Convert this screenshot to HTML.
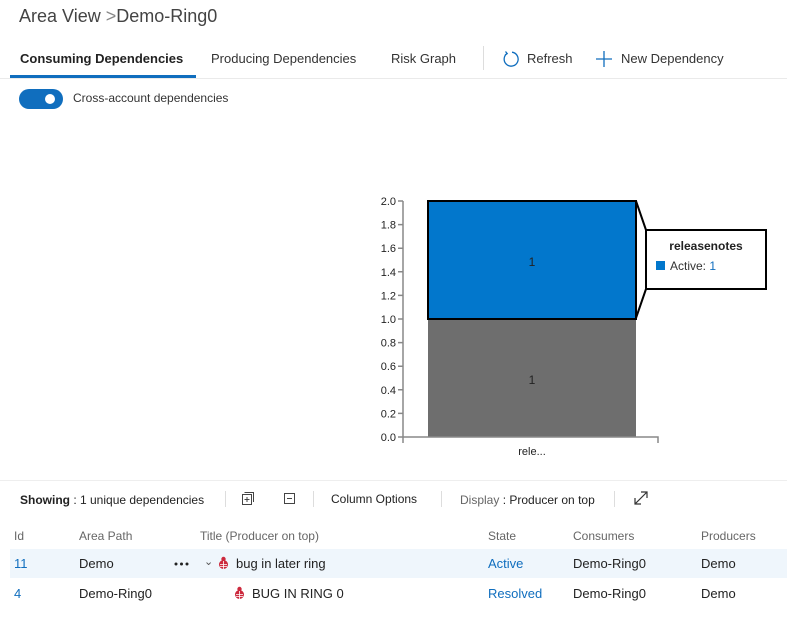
<!DOCTYPE html>
<html><head><meta charset="utf-8"><style>
body{margin:0;width:787px;height:620px;background:#fff;font-family:"Segoe UI","Liberation Sans",sans-serif;color:#333;position:relative;overflow:hidden}
.a{position:absolute;white-space:nowrap}
.s13{font-size:13px}
.g{color:#666}
.blue{color:#106ebe}
</style></head><body>
<div class="a" style="left:19px;top:6px;font-size:18px;color:#444;font-weight:300">Area View <span style="color:#888">&gt;</span>Demo-Ring0</div>

<div class="a s13" style="left:20px;top:51px;font-weight:600;color:#222">Consuming Dependencies</div>
<div class="a" style="left:10px;top:75px;width:186px;height:3px;background:#106ebe"></div>
<div class="a" style="left:0;top:78px;width:787px;height:1px;background:#eaeaea"></div>
<div class="a s13" style="left:211px;top:51px">Producing Dependencies</div>
<div class="a s13" style="left:391px;top:51px">Risk Graph</div>
<div class="a" style="left:483px;top:46px;width:1px;height:24px;background:#ddd"></div>
<svg class="a" style="left:502px;top:50px" width="18" height="18" viewBox="0 0 18 18"><path d="M5 3.5 A7 7 0 1 0 10 2.2" fill="none" stroke="#106ebe" stroke-width="1.3"/><path d="M3.5 1.5 L5.2 3.6 L3 5" fill="none" stroke="#106ebe" stroke-width="1.3"/></svg>
<div class="a s13" style="left:527px;top:51px">Refresh</div>
<svg class="a" style="left:596px;top:51px" width="16" height="16"><path d="M8 0V16M0 8H16" stroke="#106ebe" stroke-width="1.3"/></svg>
<div class="a s13" style="left:621px;top:51px">New Dependency</div>

<div class="a" style="left:19px;top:89px;width:44px;height:20px;border-radius:10px;background:#106ebe"></div>
<div class="a" style="left:45px;top:94px;width:10px;height:10px;border-radius:5px;background:#fff"></div>
<div class="a" style="left:73px;top:91px;font-size:12px">Cross-account dependencies</div>

<svg class="a" style="left:0;top:0" width="787" height="470" font-family="Segoe UI,Liberation Sans,sans-serif" font-size="11">
<rect x="428" y="319" width="208" height="118" fill="#6e6e6e"/>
<rect x="428" y="201" width="208" height="118" fill="#0277cc" stroke="#000" stroke-width="2"/>
<path d="M636 201 L646 230 M636 318 L646 289" stroke="#000" stroke-width="2"/>
<rect x="646" y="230" width="120" height="59" fill="#fff" stroke="#000" stroke-width="2"/>
<text x="706" y="250" text-anchor="middle" font-weight="bold" font-size="12" fill="#222">releasenotes</text>
<rect x="656" y="261" width="9" height="9" fill="#0277cc"/>
<text x="670" y="270" font-size="12" fill="#333">Active: <tspan fill="#106ebe">1</tspan></text>
<text x="532" y="266" text-anchor="middle" fill="#222" font-size="12">1</text>
<text x="532" y="384" text-anchor="middle" fill="#222" font-size="12">1</text>
<path d="M403 201 V443 M403 437 H658 V443" stroke="#888" stroke-width="1.5" fill="none"/>
<g stroke="#888" stroke-width="1.5">
<path d="M398 201H403M398 224.6H403M398 248.2H403M398 271.8H403M398 295.4H403M398 319H403M398 342.6H403M398 366.2H403M398 389.8H403M398 413.4H403M398 437H403"/>
</g>
<g text-anchor="end" fill="#222">
<text x="396" y="205">2.0</text><text x="396" y="228.6">1.8</text><text x="396" y="252.2">1.6</text><text x="396" y="275.8">1.4</text><text x="396" y="299.4">1.2</text><text x="396" y="323">1.0</text><text x="396" y="346.6">0.8</text><text x="396" y="370.2">0.6</text><text x="396" y="393.8">0.4</text><text x="396" y="417.4">0.2</text><text x="396" y="441">0.0</text>
</g>
<text x="532" y="455" text-anchor="middle" fill="#222">rele...</text>
</svg>

<div class="a" style="left:0;top:480px;width:787px;height:1px;background:#eee"></div>
<div class="a" style="left:20px;top:493px;font-size:12px;color:#222"><b>Showing</b> : 1 unique dependencies</div>
<div class="a" style="left:225px;top:491px;width:1px;height:16px;background:#ddd"></div>
<svg class="a" style="left:242px;top:492px" width="12" height="13"><rect x="0.5" y="2.5" width="9" height="10" fill="none" stroke="#444"/><path d="M2.5 0.5H11.5V10" fill="none" stroke="#444"/><path d="M5 5V10M2.5 7.5H7.5" stroke="#444"/></svg>
<svg class="a" style="left:284px;top:493px" width="11" height="11"><rect x="0.5" y="0.5" width="10" height="10" fill="none" stroke="#444"/><path d="M3 5.5H8" stroke="#444"/></svg>
<div class="a" style="left:313px;top:491px;width:1px;height:16px;background:#ddd"></div>
<div class="a" style="left:331px;top:492px;font-size:12px;color:#222">Column Options</div>
<div class="a" style="left:441px;top:491px;width:1px;height:16px;background:#ddd"></div>
<div class="a" style="left:460px;top:493px;font-size:12px;color:#222"><span class="g">Display</span> : Producer on top</div>
<div class="a" style="left:614px;top:491px;width:1px;height:16px;background:#ddd"></div>
<svg class="a" style="left:634px;top:491px" width="14" height="14"><path d="M1 13L13 1M7 1H13V7M1 7V13H7" fill="none" stroke="#333" stroke-width="1.2"/></svg>

<div class="a g" style="left:14px;top:529px;font-size:12px">Id</div>
<div class="a g" style="left:79px;top:529px;font-size:12px">Area Path</div>
<div class="a g" style="left:200px;top:529px;font-size:12px">Title (Producer on top)</div>
<div class="a g" style="left:488px;top:529px;font-size:12px">State</div>
<div class="a g" style="left:573px;top:529px;font-size:12px">Consumers</div>
<div class="a g" style="left:701px;top:529px;font-size:12px">Producers</div>

<div class="a" style="left:10px;top:549px;width:777px;height:29px;background:#eff6fc"></div>
<div class="a s13 blue" style="left:14px;top:556px">11</div>
<div class="a s13" style="left:79px;top:556px;color:#222">Demo</div>
<svg class="a" style="left:174px;top:562px" width="15" height="4"><circle cx="2" cy="2" r="1.5" fill="#222"/><circle cx="7.5" cy="2" r="1.5" fill="#222"/><circle cx="13" cy="2" r="1.5" fill="#222"/></svg>
<div class="a" style="left:204px;top:555px;font-size:11px;color:#555">⌄</div>
<svg class="a" style="left:218px;top:556px" width="11" height="13" viewBox="0 0 11 13"><circle cx="5.5" cy="3" r="2.2" fill="#cc293d"/><ellipse cx="5.5" cy="8.5" rx="4.5" ry="4.5" fill="#cc293d"/><path d="M5.5 5V13M2 8.5H9M2 10.5H9" stroke="#fff" stroke-width="0.8"/></svg>
<div class="a s13" style="left:236px;top:556px;color:#222">bug in later ring</div>
<div class="a s13 blue" style="left:488px;top:556px">Active</div>
<div class="a s13" style="left:573px;top:556px;color:#222">Demo-Ring0</div>
<div class="a s13" style="left:701px;top:556px;color:#222">Demo</div>

<div class="a s13 blue" style="left:14px;top:586px">4</div>
<div class="a s13" style="left:79px;top:586px;color:#222">Demo-Ring0</div>
<svg class="a" style="left:234px;top:586px" width="11" height="13" viewBox="0 0 11 13"><circle cx="5.5" cy="3" r="2.2" fill="#cc293d"/><ellipse cx="5.5" cy="8.5" rx="4.5" ry="4.5" fill="#cc293d"/><path d="M5.5 5V13M2 8.5H9M2 10.5H9" stroke="#fff" stroke-width="0.8"/></svg>
<div class="a s13" style="left:252px;top:586px;color:#222">BUG IN RING 0</div>
<div class="a s13 blue" style="left:488px;top:586px">Resolved</div>
<div class="a s13" style="left:573px;top:586px;color:#222">Demo-Ring0</div>
<div class="a s13" style="left:701px;top:586px;color:#222">Demo</div>
</body></html>
